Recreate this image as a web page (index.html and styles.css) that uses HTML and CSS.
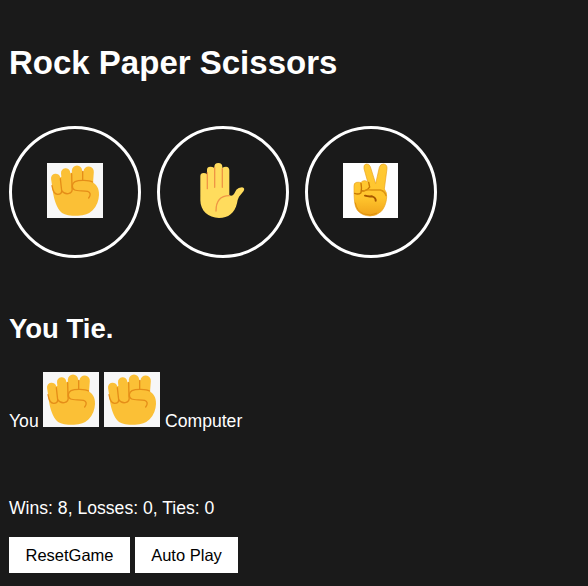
FILE: index.html
```html
<!DOCTYPE html>
<html lang="en">
<head>
<meta charset="utf-8">
<title>Rock Paper Scissors</title>
<link rel="stylesheet" href="styles.css">
</head>
<body>
<svg class="defs" aria-hidden="true">
  <symbol id="rock" viewBox="0 0 168 165">
    <rect width="168" height="165" fill="#f7f7f7"/>
    <path d="M17 83C21 105 25 125 39 144Q49 157 76 158H93Q121 158 137 142Q155 123 156 96C157 76 148 65 137 58L138 24L78 28L42 42L16 56Z" fill="#fbc036"/>
    <g fill="#fbc036" stroke="#fbc036" stroke-linecap="round">
      <path d="M26 46L31 78" stroke-width="28"/>
      <path d="M56 30L61 76" stroke-width="28"/>
      <path d="M90 23L90 56" stroke-width="31"/>
      <path d="M125 26L123 54" stroke-width="31"/>
    </g>
    <g fill="none" stroke="#e58d18" stroke-width="4" stroke-linecap="round">
      <path d="M15 68C18 87 24 94 32 94C40 94 44 89 44 83L40 47"/>
      <path d="M44 83C50 92 57 93 64 92C73 90 77 83 75 74L74 32"/>
      <path d="M107 25V51"/>
      <path d="M137 57C126 51 96 50 84 56C74 61 73 76 83 81C91 85 111 82 122 85C131 88 132 96 125 105"/>
    </g>
  </symbol>
  <symbol id="paper" viewBox="10 0 165 165">
    <path d="M26 40Q26 30 36 30Q42 30 46 34V20Q46 11 56 11Q63 11 68 15V12Q68 0 80 0Q92 0 92 12V15Q96 11 103 11Q113 12 113 22V97Q122 101 127 93L134 80Q140 74 151 73Q161 75 156 84L142 101Q138 108 136 121C129 151 110 165 82 165C50 165 26 143 26 112Z" fill="#ffdc5d"/>
    <g fill="none" stroke="#ef9645" stroke-width="4" stroke-linecap="round">
      <path d="M47 29V77M69 14V73M92 17V73"/>
      <path d="M73 144C73 112 88 98 113 98"/>
    </g>
  </symbol>
  <symbol id="scissors" viewBox="0 0 165 165">
    <defs>
      <linearGradient id="skin" x1="0" y1="0" x2="0" y2="1">
        <stop offset="0" stop-color="#ffca35"/>
        <stop offset=".65" stop-color="#ffc52d"/>
        <stop offset="1" stop-color="#f0a31a"/>
      </linearGradient>
      <filter id="soft" x="-20%" y="-20%" width="140%" height="140%"><feGaussianBlur stdDeviation="1.8"/></filter>
    </defs>
    <rect width="165" height="165" fill="#fff"/>
    <path d="M33 69Q32 60 41 58Q49 57 54 59Q57 52 66 53L74 56L63 17Q61 5 69 3Q78 1 82 11L98 62L109 13Q112 3 121 3Q133 4 132 17L124 78Q132 88 131 102C130 122 122 137 115 145Q101 159 81 159Q58 158 45 144C34 131 33 110 33 69Z" fill="url(#skin)" stroke="#e9a11c" stroke-width="2"/>
    <g fill="none" stroke="#c87807" stroke-width="4" stroke-linecap="round" filter="url(#soft)">
      <path d="M35 91Q46 96 54 89Q57 74 54 61M57 83Q65 86 74 79L80 72L77 58"/>
      <path d="M59 85Q66 80 84 81H112Q125 84 129 98" stroke="#dc9212"/>
      <path d="M66 98Q74 101 87 100Q99 104 98 113" stroke="#a65606" stroke-width="6"/>
      <path d="M37 120Q42 145 62 153Q82 160 101 151" stroke="#df9012" stroke-width="3"/>
    </g>
  </symbol>
</svg>
<h1 class="title">Rock Paper Scissors</h1>
<div class="moves">
  <button class="move" aria-label="Rock"><svg class="icon icon-rock"><use href="#rock"/></svg></button>
  <button class="move" aria-label="Paper"><svg class="icon"><use href="#paper"/></svg></button>
  <button class="move" aria-label="Scissors"><svg class="icon"><use href="#scissors"/></svg></button>
</div>
<h2 class="result">You Tie.</h2>
<div class="picks">
  <span class="you">You</span>
  <svg class="icon icon-rock"><use href="#rock"/></svg>
  <svg class="icon icon-rock"><use href="#rock"/></svg>
  <span>Computer</span>
</div>
<p class="score">Wins: 8, Losses: 0, Ties: 0</p>
<div class="actions">
  <button class="action reset">ResetGame</button>
  <button class="action auto">Auto Play</button>
</div>
</body>
</html>
```
FILE: styles.css
```css
body {
  margin: 0;
  padding: 44px 9px 0;
  background: #1a1a1a;
  color: #fff;
  font: 17.6px/20px "Liberation Sans", Arial, sans-serif;
}

.defs {
  position: absolute;
  width: 0;
  height: 0;
}

.title {
  margin: 0 0 44px;
  font-size: 33px;
  line-height: 38px;
}

.moves {
  display: flex;
  gap: 16px;
}

.move {
  box-sizing: border-box;
  display: flex;
  align-items: center;
  justify-content: center;
  width: 132px;
  height: 132px;
  padding: 0 1px 3px 0;
  border: 3px solid #fff;
  border-radius: 50%;
  background: transparent;
}

.icon {
  display: block;
  flex: none;
  width: 55px;
  height: 55px;
}

.icon-rock {
  width: 56px;
}

.result {
  margin: 55px 0 27px;
  font-size: 27.5px;
  line-height: 32px;
}

.picks {
  display: flex;
  align-items: baseline;
  gap: 5px;
}

.you {
  width: 29px;
}

.score {
  margin: 67px 0 19px;
}

.actions {
  display: flex;
  gap: 5px;
}

.action {
  height: 36px;
  padding: 0;
  border: 0;
  background: #fff;
  color: #000;
  font: 16.5px/20px "Liberation Sans", Arial, sans-serif;
}

.reset {
  width: 121px;
}

.auto {
  width: 103px;
}
```
